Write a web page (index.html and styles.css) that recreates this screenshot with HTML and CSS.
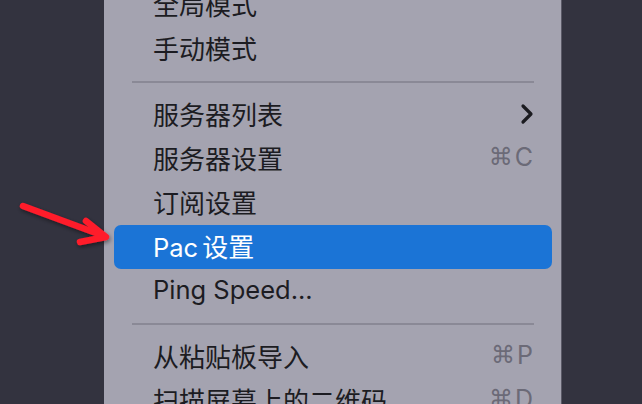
FILE: index.html
```html
<!DOCTYPE html>
<html lang="zh">
<head>
<meta charset="utf-8">
<link rel="stylesheet" href="styles.css">
</head>
<body>
<div class="screen">
  <div class="backdrop-left"></div>
  <div class="panel">
    <div class="menu">
      <div class="item"><span class="label">全局模式</span></div>
      <div class="item"><span class="label">手动模式</span></div>
      <div class="sep"><div class="line"></div></div>
      <div class="item"><span class="label">服务器列表</span>
        <svg class="chev" width="14" height="22" viewBox="0 0 14 22"><path d="M3 3 L11 11 L3 19" fill="none" stroke="#1b1b20" stroke-width="3.2" stroke-linecap="round" stroke-linejoin="round"/></svg>
      </div>
      <div class="item"><span class="label">服务器设置</span><span class="key"><span class="cmd">⌘</span>C</span></div>
      <div class="item"><span class="label">订阅设置</span></div>
      <div class="item active"><span class="label"><span class="latin pac">Pac</span>设置</span></div>
      <div class="item"><span class="label"><span class="latin">Ping Speed...</span></span></div>
      <div class="sep"><div class="line"></div></div>
      <div class="item"><span class="label">从粘贴板导入</span><span class="key"><span class="cmd">⌘</span>P</span></div>
      <div class="item"><span class="label">扫描屏幕上的二维码</span><span class="key"><span class="cmd">⌘</span>D</span></div>
    </div>
  </div>
  <div class="backdrop-right"></div>
  <svg class="arrow" width="642" height="404" viewBox="0 0 642 404">
    <defs>
      <filter id="sh" x="-20%" y="-20%" width="140%" height="140%">
        <feDropShadow dx="1" dy="2" stdDeviation="2" flood-color="#000" flood-opacity="0.45"/>
      </filter>
    </defs>
    <g filter="url(#sh)" fill="none" stroke="#ff1b2b" stroke-width="6.5" stroke-linecap="round" stroke-linejoin="round">
      <path d="M23 206 L104 236"/>
      <path d="M86 221 L106 237 L80 242"/>
    </g>
  </svg>
</div>
</body>
</html>
```

FILE: styles.css
```css
html, body {
  margin: 0;
  padding: 0;
  width: 642px;
  height: 404px;
  overflow: hidden;
  background: #33333f;
}

.screen {
  position: relative;
  display: flex;
  width: 642px;
  height: 404px;
  overflow: hidden;
}

.backdrop-left {
  width: 104px;
  flex: none;
  background: #33333f;
}

.backdrop-right {
  flex: 1;
  background: #33333f;
  border-left: 1px solid #5a5966;
}

.panel {
  width: 457px;
  flex: none;
  background: #a4a3b0;
  overflow: hidden;
}

.menu {
  margin-top: -17px;
  padding: 0 9px 0 10px;
  font-family: Inter, "Noto Sans CJK SC", sans-serif;
  font-size: 26px;
  color: #1c1c22;
}

.item {
  box-sizing: border-box;
  height: 44px;
  display: flex;
  align-items: center;
  padding: 0 19px 4px 39px;
  border-radius: 7px;
}

.label {
  flex: 1;
  white-space: nowrap;
}

.latin {
  font-size: 25.5px;
}

.pac {
  margin-right: 4px;
}

.item.active {
  background: #1b74d6;
  color: #ffffff;
}

.key {
  color: #6b6a77;
  font-size: 25px;
  display: flex;
  align-items: center;
  gap: 2px;
}

.cmd {
  font-family: "DejaVu Sans", sans-serif;
  font-size: 24px;
}

.chev {
  margin-right: -1px;
  margin-top: 2px;
}

.sep {
  height: 22px;
  display: flex;
  align-items: center;
  padding: 0 18px;
}

.line {
  flex: 1;
  height: 2px;
  background: #8a8996;
}

.arrow {
  position: absolute;
  left: 0;
  top: 0;
  pointer-events: none;
}
```
